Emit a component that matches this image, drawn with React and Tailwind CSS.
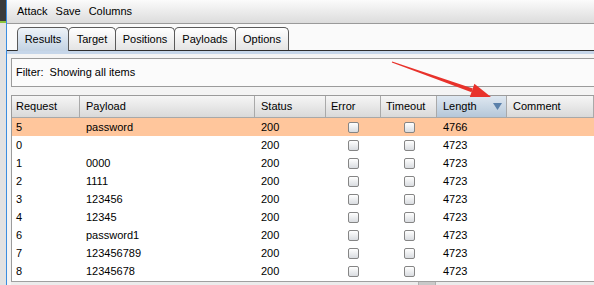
import React from 'react';

const columns = [
    { header: 'Request', w: 'w-[68px]', pl: 'pl-[4px]' },
    { header: 'Payload', w: 'w-[175px]', pl: 'pl-[6px]' },
    { header: 'Status', w: 'w-[71px]', pl: 'pl-[6px]' },
    { header: 'Error', w: 'w-[55px]', pl: 'pl-[5px]' },
    { header: 'Timeout', w: 'w-[56px]', pl: 'pl-[5px]' },
    { header: 'Length', w: 'w-[70px]', pl: 'pl-[6px]', sorted: true },
    { header: 'Comment', w: 'flex-1', pl: 'pl-[6px]' },
];

const rows = [
    ['5', 'password', '200', '4766'],
    ['0', '', '200', '4723'],
    ['1', '0000', '200', '4723'],
    ['2', '1111', '200', '4723'],
    ['3', '123456', '200', '4723'],
    ['4', '12345', '200', '4723'],
    ['6', 'password1', '200', '4723'],
    ['7', '123456789', '200', '4723'],
    ['8', '12345678', '200', '4723'],
];

const tabs = [
    { label: 'Results', w: 'w-[52px]', active: true },
    { label: 'Target', w: 'w-[48px]' },
    { label: 'Positions', w: 'w-[60px]' },
    { label: 'Payloads', w: 'w-[62px]' },
    { label: 'Options', w: 'w-[54px]' },
];

const Checkbox = () => (
    <div className="w-[11px] h-[11px] rounded-[2px] border border-[#858585] bg-gradient-to-b from-[#ffffff] to-[#d9dce0]"></div>
);

const App = () => {
    return (
        <div className="relative w-[594px] h-[285px] overflow-hidden flex bg-[#f4f4f4] text-[11px] text-black font-['Liberation_Sans',Arial,sans-serif]">
            {/* desktop strip on the left */}
            <div className="w-[6px] flex flex-col">
                <div className="h-[21px] bg-[#3b3b3b]"></div>
                <div className="h-[2px] bg-[#8cc43c]"></div>
                <div className="flex-1 bg-[#e2e2e2]"></div>
            </div>
            <div className="w-px bg-[#3b8de0]"></div>

            <div className="flex-1 flex flex-col">
                {/* menu bar */}
                <div className="h-[24px] flex items-center gap-[8px] pl-[10px] bg-gradient-to-b from-[#fbfbfb] to-[#dcdcdc] border-b border-[#9a9a9a]">
                    <span>Attack</span>
                    <span>Save</span>
                    <span>Columns</span>
                </div>

                {/* tabs */}
                <div className="h-[27px] flex items-end pl-[10px] bg-[#fafafa] border-b border-[#2e2e2e]">
                    {tabs.map((tab, i) => (
                        <div
                            key={i}
                            className={`${tab.w} h-[23px] flex items-center justify-center rounded-t-[5px] border border-b-0 border-[#5a5a5a] -mr-px ${tab.active ? 'bg-gradient-to-b from-[#eef3f8] to-[#c2d2e3] -mb-px h-[24px] pb-px z-10' : 'bg-gradient-to-b from-[#ffffff] to-[#e4e4e4]'}`}
                        >
                            {tab.label}
                        </div>
                    ))}
                </div>
                <div className="h-[3px] bg-[#c6d6e9]"></div>

                <div className="flex-1 flex flex-col pl-[4px] pt-[4px]">
                    {/* filter bar */}
                    <div className="h-[29px] flex items-center pl-[4px] bg-[#fbfbfb] border border-r-0 border-[#9b9b9b]">
                        Filter:&nbsp; Showing all items
                    </div>

                    {/* results table */}
                    <div className="mt-[8px] h-[186px] flex flex-col bg-white border border-r-0 border-b-0 border-[#9b9b9b]">
                        <div className="h-[22px] flex border-b border-[#a8a8a8]">
                            {columns.map((col, i) => (
                                <div
                                    key={i}
                                    className={`${col.w} ${col.pl} flex items-center justify-between pr-[4px] border-r border-[#a9a9a9] ${col.sorted ? 'bg-gradient-to-b from-[#dfe8f1] to-[#b5c7d9]' : 'bg-gradient-to-b from-[#f6f6f6] to-[#d9d9d9]'}`}
                                >
                                    <span>{col.header}</span>
                                    {col.sorted && (
                                        <svg width="9" height="7" viewBox="0 0 9 7">
                                            <path d="M0 0 H9 L4.5 7 Z" fill="#5a80aa" />
                                        </svg>
                                    )}
                                </div>
                            ))}
                        </div>
                        {rows.map((row, r) => (
                            <div key={r} className={`h-[18px] shrink-0 flex items-center ${r === 0 ? 'bg-[#ffc69c]' : ''}`}>
                                <div className="w-[68px] pl-[4px]">{row[0]}</div>
                                <div className="w-[175px] pl-[6px]">{row[1]}</div>
                                <div className="w-[71px] pl-[6px]">{row[2]}</div>
                                <div className="w-[55px] flex justify-center"><Checkbox /></div>
                                <div className="w-[56px] flex justify-center"><Checkbox /></div>
                                <div className="w-[70px] pl-[6px]">{row[3]}</div>
                                <div className="flex-1"></div>
                            </div>
                        ))}
                    </div>
                    {/* horizontal scrollbar sliver */}
                    <div className="flex-1 border-t border-[#a0a0a0] bg-[#ececec] flex">
                        <div className="ml-[407px] w-[18px] h-[3px] bg-[#c9c9c9] border-x border-[#b0b0b0]"></div>
                    </div>
                </div>
            </div>

            {/* red annotation arrow */}
            <svg className="absolute left-0 top-0 pointer-events-none" width="594" height="285" viewBox="0 0 594 285">
                <polygon points="392.2,61.5 391.8,62.5 471.5,92.2 472.8,88.4" fill="#e8322b" />
                <polygon points="491,97 469.8,96.9 474.4,83.7" fill="#e8322b" />
            </svg>
        </div>
    );
};

export default App;
